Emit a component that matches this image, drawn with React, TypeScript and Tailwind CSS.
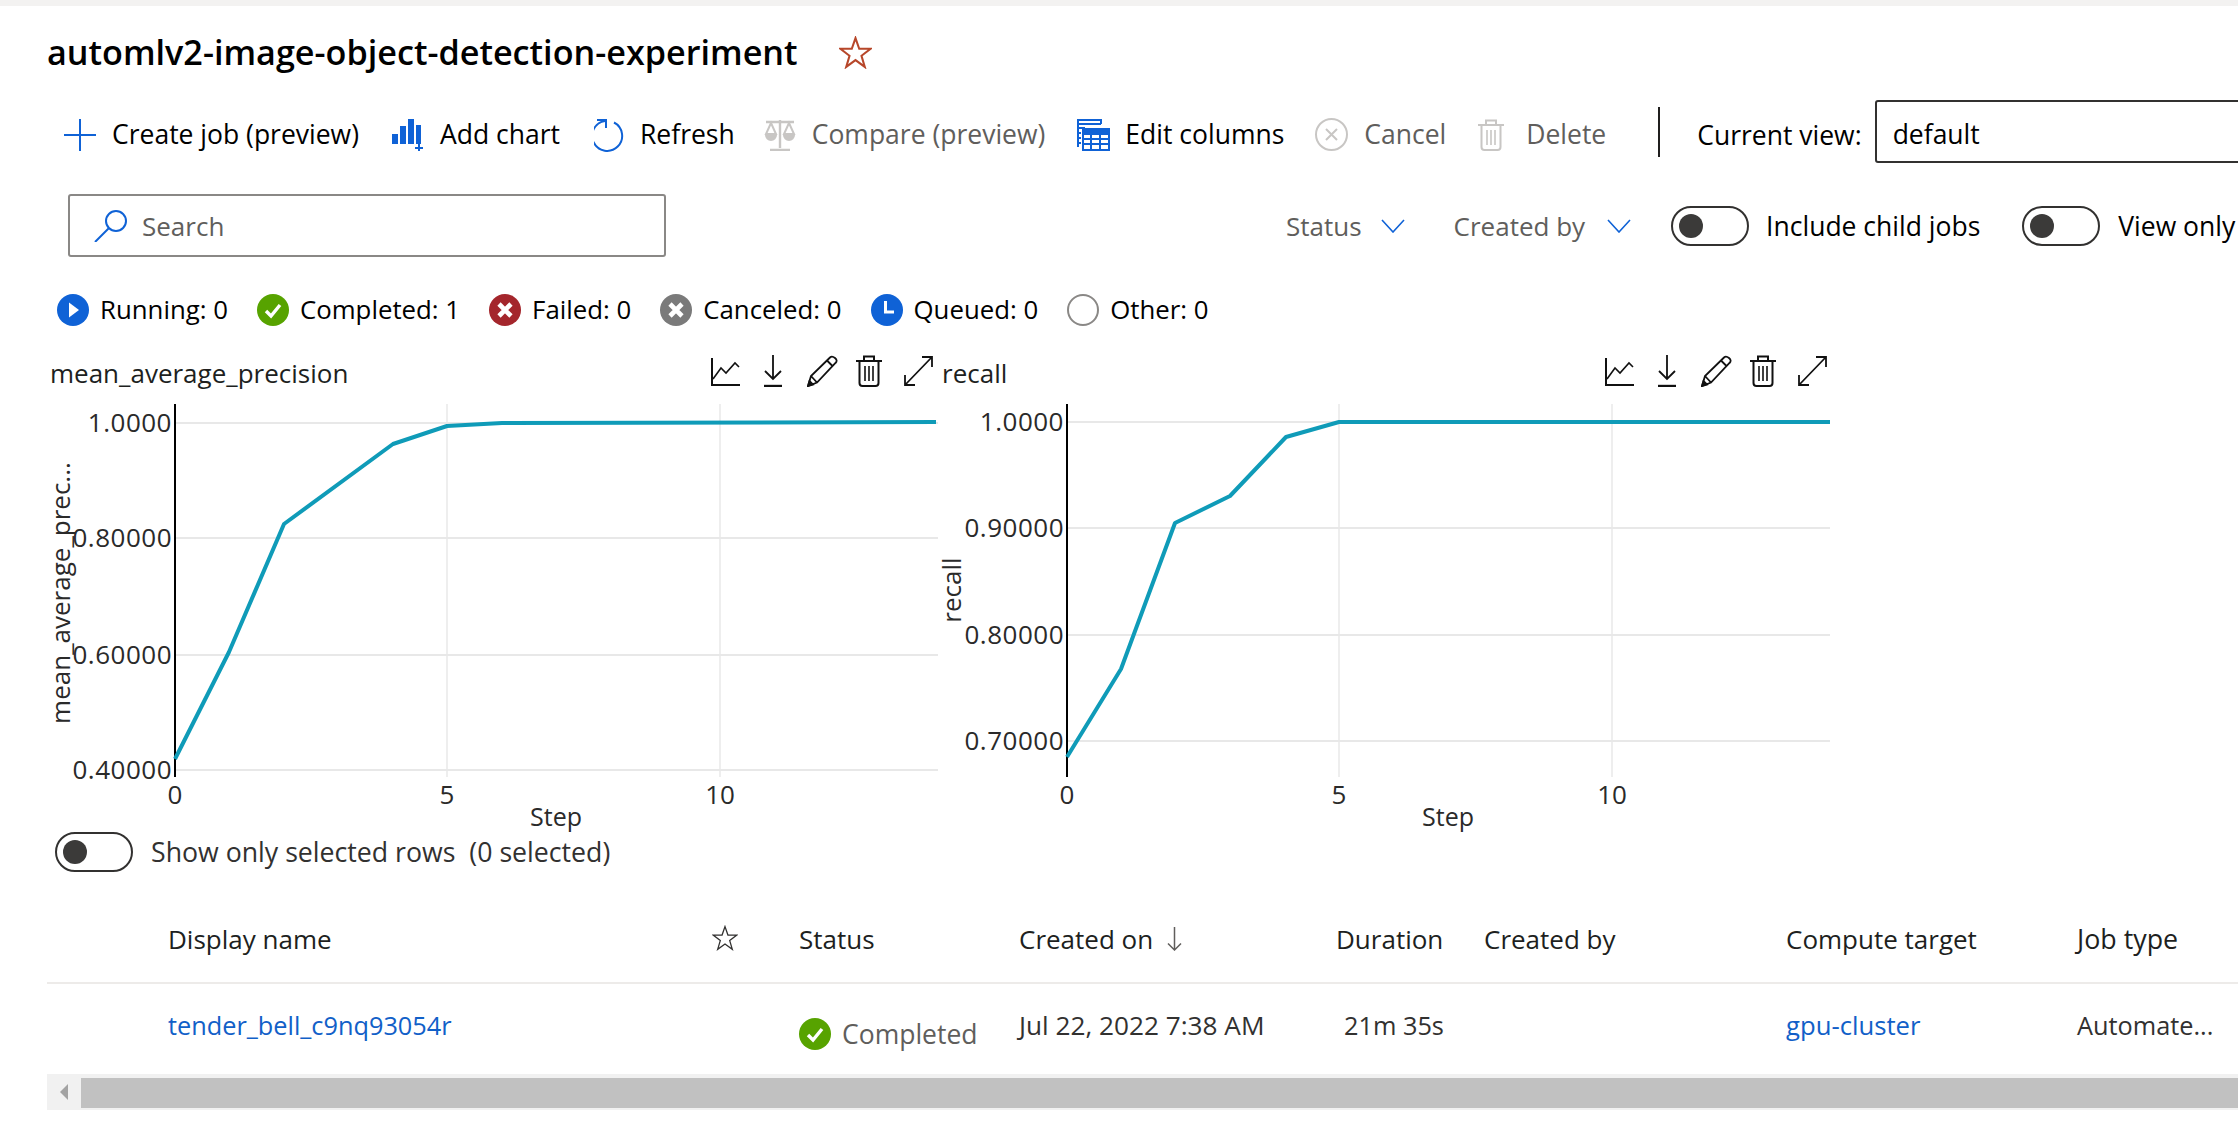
import type { ReactNode } from 'react';

const BLUE = '#0f62d6';
const GREY = '#c8c6c4';

const PlusIcon = () => (
  <svg width="32" height="32" viewBox="0 0 32 32" stroke={BLUE} strokeWidth="2" fill="none">
    <path d="M0 16H32M16 0V32" />
  </svg>
);

const AddChartIcon = () => (
  <svg width="32" height="32" viewBox="0 0 32 32" fill={BLUE}>
    <rect x="0" y="15" width="6" height="10" />
    <rect x="8" y="7" width="6" height="18" />
    <rect x="16" y="0" width="6" height="25" />
    <rect x="24" y="6" width="5" height="19" />
    <path d="M23 29h8M27 25v7" stroke={BLUE} strokeWidth="2" fill="none" />
  </svg>
);

const RefreshIcon = () => (
  <svg width="32" height="34" viewBox="0 0 32 34" stroke={BLUE} strokeWidth="2" fill="none">
    <path d="M20 4.5A15 15 0 1 1 11 3" />
    <path d="M3 2H12V10" />
  </svg>
);

const CompareIcon = () => (
  <svg width="32" height="32" viewBox="0 0 32 32" stroke={GREY} strokeWidth="2" fill="none">
    <path d="M2 3H30M16 1V29M6 31H26" strokeWidth="2.4" />
    <path d="M7 4L2 15H12ZM25 4L20 15H30Z" />
    <path d="M2 16A5 5 0 0 0 12 16ZM20 16A5 5 0 0 0 30 16Z" fill={GREY} />
  </svg>
);

const EditColumnsIcon = () => (
  <svg width="33" height="32" viewBox="0 0 33 32" stroke={BLUE} strokeWidth="2" fill="none">
    <path d="M1 28V1H24V5" />
    <path d="M1 5H24M1 9H8M1 14H4M1 19H4M1 24H4" />
    <rect x="6" y="10" width="26" height="21" />
    <path d="M6 15H32M6 20H32M6 25H32M14 10V31M23 10V31" />
    <rect x="6" y="10" width="26" height="5" fill={BLUE} />
  </svg>
);

const CancelIcon = () => (
  <svg width="33" height="33" viewBox="0 0 33 33" stroke={GREY} strokeWidth="2" fill="none">
    <circle cx="16.5" cy="16.5" r="15.5" />
    <path d="M11 11L22 22M22 11L11 22" />
  </svg>
);

const TrashIcon = ({ color }: { color: string }) => (
  <svg width="26" height="32" viewBox="0 0 26 32" stroke={color} strokeWidth="2" fill="none">
    <path d="M0 6H26M8 6V1.5H18V6M3.5 6V28Q3.5 31 6.5 31H19.5Q22.5 31 22.5 28V6" />
    <path d="M9 11V26M13 11V26M17 11V26" strokeWidth="1.6" />
  </svg>
);

const SearchIcon = () => (
  <svg width="34" height="32" viewBox="0 0 34 32" stroke={BLUE} strokeWidth="2" fill="none">
    <circle cx="22" cy="11" r="10" />
    <path d="M15 18L1 32" />
  </svg>
);

const Chevron = () => (
  <svg width="24" height="14" viewBox="0 0 24 14" stroke={BLUE} strokeWidth="1.6" fill="none">
    <path d="M1 1L12 13L23 1" />
  </svg>
);

const SortArrow = () => (
  <svg width="15" height="24" viewBox="0 0 15 24" stroke="#605e5c" strokeWidth="1.5" fill="none">
    <path d="M7.5 0V23M1 16.5L7.5 23L14 16.5" />
  </svg>
);

const StarIcon = ({ color, size, width = 1.6 }: { color: string; size: number; width?: number }) => (
  <svg width={size} height={size} viewBox="0 0 32 32" stroke={color} strokeWidth={width} fill="none">
    <path d="M16 2L19.6 12.4H30.6L21.8 19.2L25 30L16 23.4L7 30L10.2 19.2L1.4 12.4H12.4Z" />
  </svg>
);

const CheckBadge = () => (
  <svg width="32" height="32" viewBox="0 0 32 32">
    <circle cx="16" cy="16" r="16" fill="#57a300" />
    <path d="M9 17L14 22L23 11" stroke="#fff" strokeWidth="3.4" fill="none" />
  </svg>
);

const RunningBadge = () => (
  <svg width="32" height="32" viewBox="0 0 32 32">
    <circle cx="16" cy="16" r="16" fill={BLUE} />
    <path d="M12 8.5L22 16L12 23.5Z" fill="#fff" />
  </svg>
);

const CrossBadge = ({ color }: { color: string }) => (
  <svg width="32" height="32" viewBox="0 0 32 32">
    <circle cx="16" cy="16" r="16" fill={color} />
    <path d="M10 10L22 22M22 10L10 22" stroke="#fff" strokeWidth="4.6" fill="none" />
  </svg>
);

const QueuedBadge = () => (
  <svg width="32" height="32" viewBox="0 0 32 32">
    <circle cx="16" cy="16" r="16" fill={BLUE} />
    <path d="M14.5 7V18H23" stroke="#fff" strokeWidth="3" fill="none" />
  </svg>
);

const OtherBadge = () => (
  <svg width="32" height="32" viewBox="0 0 32 32">
    <circle cx="16" cy="16" r="15" fill="none" stroke="#8a8886" strokeWidth="2" />
  </svg>
);

const ChartToolIcons = () => (
  <div className="flex items-center">
    <svg width="29" height="32" viewBox="0 0 29 32" stroke="#111" strokeWidth="2" fill="none">
      <path d="M1 3V30H29" />
      <path d="M2 24L10 13L15 18L24 8L28 12" strokeWidth="1.6" />
    </svg>
    <svg width="18" height="32" viewBox="0 0 18 32" stroke="#111" strokeWidth="1.8" fill="none" className="ml-[24px]">
      <path d="M9 0V24M1 16L9 24L17 16" />
      <path d="M0 31H18" strokeWidth="2.4" />
    </svg>
    <svg width="31" height="32" viewBox="0 0 31 32" stroke="#111" strokeWidth="1.8" fill="none" className="ml-[25px]">
      <path d="M1 31L4 21L23 2.5Q25 0.5 28 3T28.5 8L10 27.5ZM4 21L10 27.5M20 5.5L26 11.5" />
      <path d="M1 31L2.5 26L6 29.5Z" fill="#111" />
    </svg>
    <div className="ml-[18px]">
      <TrashIcon color="#111" />
    </div>
    <svg width="29" height="30" viewBox="0 0 29 30" stroke="#111" strokeWidth="1.8" fill="none" className="ml-[22px]">
      <path d="M1 29L28 1M18 1H28V11M1 19V29H11" />
    </svg>
  </div>
);

const Toggle = () => (
  <div className="flex h-[40px] w-[78px] shrink-0 items-center rounded-full border-2 border-[#323130] pl-[6px]">
    <div className="h-[24px] w-[24px] rounded-full bg-[#3b3a39]" />
  </div>
);

type ToolbarItemProps = {
  icon: ReactNode;
  label: string;
  disabled?: boolean;
  className?: string;
};

const ToolbarItem = ({ icon, label, disabled, className = 'gap-[16px]' }: ToolbarItemProps) => (
  <div className={`flex items-center ${className} ${disabled ? 'text-[#605e5c]' : 'text-black'}`}>
    {icon}
    <span className="whitespace-nowrap">{label}</span>
  </div>
);

const statuses = [
  { icon: <RunningBadge />, label: 'Running: 0' },
  { icon: <CheckBadge />, label: 'Completed: 1' },
  { icon: <CrossBadge color="#a4262c" />, label: 'Failed: 0' },
  { icon: <CrossBadge color="#7a7a7a" />, label: 'Canceled: 0' },
  { icon: <QueuedBadge />, label: 'Queued: 0' },
  { icon: <OtherBadge />, label: 'Other: 0' },
];

type ChartProps = {
  title: string;
  titleClass: string;
  axisX: number;
  yTitle: string;
  yTitleX: number;
  yTitleY: number;
  ticks: { label: string; y: number }[];
  line: string;
};

const PlotChart = ({ title, titleClass, axisX, yTitle, yTitleX, yTitleY, ticks, line }: ChartProps) => {
  const xTicks = [
    { label: '0', x: axisX },
    { label: '5', x: axisX + 272 },
    { label: '10', x: axisX + 545 },
  ];
  return (
    <div className="w-[895px] shrink-0">
      <div className="flex h-[32px] items-center justify-between pt-[4px]">
        <span className={`text-[26px] text-[#201f1e] ${titleClass}`}>{title}</span>
      </div>
      <svg width="895" height="445" viewBox="0 0 895 445" className="overflow-visible text-[26px]">
        {ticks.map((t) => (
          <line key={t.label} x1={axisX} x2={axisX + 763} y1={t.y} y2={t.y} stroke="#e8e8e8" strokeWidth="2" />
        ))}
        {xTicks.slice(1).map((t) => (
          <line key={t.label} x1={t.x} x2={t.x} y1="17" y2="390" stroke="#e8e8e8" strokeWidth="1.5" />
        ))}
        <line x1={axisX} x2={axisX} y1="17" y2="390" stroke="#000" strokeWidth="2" />
        <polyline points={line} fill="none" stroke="#0f9bb8" strokeWidth="4" strokeLinejoin="round" />
        {ticks.map((t) => (
          <text key={t.label} x={axisX - 3} y={t.y + 9} textAnchor="end" fill="#2a2a2a" className="tracking-[0.5px]">
            {t.label}
          </text>
        ))}
        {xTicks.map((t) => (
          <text key={t.label} x={t.x} y="417" textAnchor="middle" fill="#2a2a2a">
            {t.label}
          </text>
        ))}
        <text x={axisX + 381} y="439" textAnchor="middle" fill="#2a2a2a" className="text-[25px]">
          Step
        </text>
        <text
          x={yTitleX}
          y={yTitleY}
          textAnchor="middle"
          fill="#2a2a2a"
          transform={`rotate(-90 ${yTitleX} ${yTitleY})`}
        >
          {yTitle}
        </text>
      </svg>
    </div>
  );
};

const tableCols = 'grid grid-cols-[121px_544px_87px_220px_317px_148px_302px_291px_120px] items-center';

export default function App() {
  return (
    <div className="h-[1124px] w-[2238px] overflow-hidden bg-white font-['Open_Sans','Noto_Sans',sans-serif] text-[26px] leading-none">
      <div className="h-[6px] bg-[#f3f2f1]" />

      {/* title */}
      <div className="flex h-[92px] items-center gap-[41px] pl-[47px] pt-[1px]">
        <h1 className="text-[34.2px] font-semibold text-black">automlv2-image-object-detection-experiment</h1>
        <StarIcon color="#b7472a" size={33} width={2} />
      </div>

      {/* command bar */}
      <div className="mt-[2px] flex h-[63px] items-center pl-[64px] text-[26.5px]">
        <div className="flex shrink-0 items-center pt-[6px]">
          <ToolbarItem icon={<PlusIcon />} label="Create job (preview)" />
          <ToolbarItem icon={<AddChartIcon />} label="Add chart" className="ml-[33px] gap-[16px]" />
          <ToolbarItem icon={<RefreshIcon />} label="Refresh" className="ml-[34px] gap-[14px]" />
          <ToolbarItem icon={<CompareIcon />} label="Compare (preview)" disabled className="ml-[29px] gap-[16px]" />
          <ToolbarItem icon={<EditColumnsIcon />} label="Edit columns" className="ml-[32px] gap-[15px]" />
          <ToolbarItem icon={<CancelIcon />} label="Cancel" disabled className="ml-[31px] gap-[16px]" />
          <ToolbarItem icon={<TrashIcon color={GREY} />} label="Delete" disabled className="ml-[32px] gap-[22px]" />
        </div>
        <div className="ml-[52px] h-[50px] w-[2px] shrink-0 bg-[#201f1e]" />
        <span className="ml-[37px] shrink-0 whitespace-nowrap pt-[7px] text-black">Current view:</span>
        <div className="ml-[13px] flex h-[63px] w-[500px] shrink-0 items-center rounded-[3px] border-2 border-[#323130] pl-[16px] pt-[6px] text-black">
          default
        </div>
      </div>

      {/* search and filters */}
      <div className="mt-[31px] flex h-[63px] items-center pl-[68px]">
        <div className="flex h-[63px] w-[598px] shrink-0 items-center gap-[14px] rounded-[3px] border-2 border-[#8a8886] pl-[24px] text-[#605e5c]">
          <SearchIcon />
          Search
        </div>
        <div className="ml-[620px] flex shrink-0 items-center">
          <span className="text-[#605e5c]">Status</span>
          <div className="ml-[19px]">
            <Chevron />
          </div>
          <span className="ml-[49px] text-[#605e5c]">Created by</span>
          <div className="ml-[22px]">
            <Chevron />
          </div>
          <div className="ml-[40px]">
            <Toggle />
          </div>
          <span className="ml-[17px] whitespace-nowrap pt-[1px] text-[26.5px] text-black">Include child jobs</span>
          <div className="ml-[42px]">
            <Toggle />
          </div>
          <span className="ml-[18px] whitespace-nowrap pt-[1px] text-[26.5px] text-black">View only</span>
        </div>
      </div>

      {/* status summary */}
      <div className="mt-[37px] flex h-[32px] items-center gap-[29px] pl-[57px] text-[25.8px] text-black">
        {statuses.map((s) => (
          <div key={s.label} className="flex items-center gap-[11px] whitespace-nowrap">
            {s.icon}
            {s.label}
          </div>
        ))}
      </div>

      {/* charts */}
      <div className="relative mt-[29px] flex pl-[47px]">
        <PlotChart
          title="mean_average_precision"
          titleClass="pl-[3px]"
          axisX={128}
          yTitle="mean_average_prec..."
          yTitleX={23}
          yTitleY={206}
          ticks={[
            { label: '1.0000', y: 36 },
            { label: '0.80000', y: 151 },
            { label: '0.60000', y: 268 },
            { label: '0.40000', y: 383 },
          ]}
          line="128,372 182,265 237,137 346,57 400,39 455,36 889,35"
        />
        <PlotChart
          title="recall"
          titleClass="pl-0"
          axisX={125}
          yTitle="recall"
          yTitleX={19}
          yTitleY={203}
          ticks={[
            { label: '1.0000', y: 35 },
            { label: '0.90000', y: 141 },
            { label: '0.80000', y: 248 },
            { label: '0.70000', y: 354 },
          ]}
          line="125,370 179,282 233,136 288,109 344,50 397,35 888,35"
        />
        <div className="absolute left-[711px] top-0">
          <ChartToolIcons />
        </div>
        <div className="absolute left-[1605px] top-0">
          <ChartToolIcons />
        </div>
      </div>

      {/* selected rows toggle */}
      <div className="flex h-[40px] items-center gap-[18px] pl-[55px] text-[26.7px] text-[#323130]">
        <Toggle />
        <span className="whitespace-pre">Show only selected rows  (0 selected)</span>
      </div>

      {/* table */}
      <div className="ml-[47px] mt-[26px]">
        <div className={`${tableCols} h-[86px] border-b-2 border-[#edebe9] pb-[2px] text-[26px] font-medium text-[#201f1e]`}>
          <div />
          <div>Display name</div>
          <div className="pb-[2px]">
            <StarIcon color="#323130" size={26} />
          </div>
          <div>Status</div>
          <div className="flex items-center gap-[14px]">
            Created on
            <SortArrow />
          </div>
          <div>Duration</div>
          <div>Created by</div>
          <div>Compute target</div>
          <div className="text-[26.8px]">Job type</div>
        </div>
        <div className={`${tableCols} h-[90px] pb-[7px] text-[25.3px] text-[#323130]`}>
          <div />
          <div className="text-[#1160c8]">tender_bell_c9nq93054r</div>
          <div />
          <div className="flex items-center gap-[11px] whitespace-nowrap pt-[17px] text-[26.5px] text-[#605e5c]">
            <CheckBadge />
            Completed
          </div>
          <div className="whitespace-nowrap text-[26.2px]">Jul 22, 2022 7:38 AM</div>
          <div className="pl-[8px]">21m 35s</div>
          <div />
          <div className="text-[25.7px] text-[#1160c8]">gpu-cluster</div>
          <div>Automate...</div>
        </div>
        <div className="flex h-[36px] bg-[#f1f1f1]">
          <div className="flex h-full w-[34px] items-center justify-center">
            <div className="h-0 w-0 border-y-[8px] border-r-[8px] border-y-transparent border-r-[#a3a3a3]" />
          </div>
          <div className="mt-[4px] h-[30px] flex-1 bg-[#c1c1c1]" />
        </div>
      </div>
    </div>
  );
}
